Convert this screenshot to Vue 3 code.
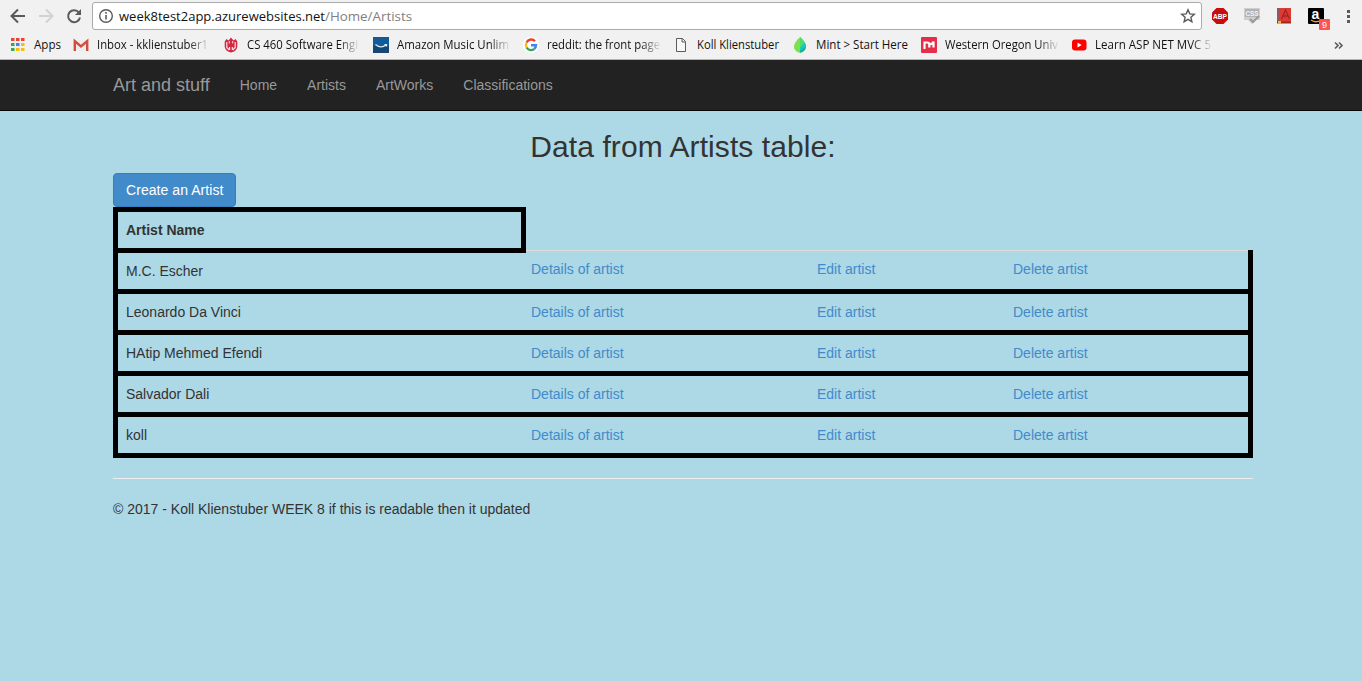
<script setup>
const bookmarks = [
  { icon: 'apps', label: 'Apps', textWidth: 27, size: 'apps' },
  { icon: 'gmail', label: 'Inbox - kklienstuber1', textWidth: 111, size: 'full' },
  { icon: 'crest', label: 'CS 460 Software Engi', textWidth: 111, size: 'full' },
  { icon: 'amazon', label: 'Amazon Music Unlim', textWidth: 112, size: 'full' },
  { icon: 'google', label: 'reddit: the front page', textWidth: 113, size: 'full' },
  { icon: 'page', label: 'Koll Klienstuber', textWidth: 82, size: 'koll' },
  { icon: 'mint', label: 'Mint > Start Here', textWidth: 92, size: 'mint' },
  { icon: 'western', label: 'Western Oregon Univ', textWidth: 113, size: 'full' },
  { icon: 'youtube', label: 'Learn ASP NET MVC 5', textWidth: 116, size: 'full' },
]
const links = ['Home', 'Artists', 'ArtWorks', 'Classifications']
const artists = ['M.C. Escher', 'Leonardo Da Vinci', 'HAtip Mehmed Efendi', 'Salvador Dali', 'koll']
const appColors = ['#ea4335', '#ea4335', '#ea4335', '#34a853', '#4285f4', '#fbbc05', '#34a853', '#fbbc05', '#fbbc05']
</script>

<template>
  <div class="window">
    <header class="browser">
      <div class="toolbar">
        <svg class="nav-icons" width="92" height="32" viewBox="0 0 92 32" fill="none" stroke-width="2">
          <path d="M25 16H12M18 9.5 11.5 16 18 22.5" stroke="#5a5a5a" />
          <path d="M39 16H52M46 9.5 52.5 16 46 22.5" stroke="#d2d2d2" />
          <path d="M79 12.600A6 6 0 1 0 80 17.500" stroke="#5a5a5a" />
          <path d="M81 9v6h-6z" fill="#5a5a5a" />
        </svg>
        <div class="omnibox">
          <svg width="26" height="26" viewBox="0 0 26 26">
            <circle cx="13" cy="13" r="6.3" fill="none" stroke="#5a5a5a" stroke-width="1.4" />
            <path d="M12.2 9h1.6v1.7h-1.6zM12.2 12h1.6v4.6h-1.6z" fill="#5a5a5a" />
          </svg>
          <svg class="url" width="1056" height="26">
            <text x="0" y="18" textLength="206" lengthAdjust="spacingAndGlyphs" fill="#111">week8test2app.azurewebsites.net</text>
            <text x="206" y="18" textLength="87" lengthAdjust="spacingAndGlyphs" fill="#808080">/Home/Artists</text>
          </svg>
          <svg width="26" height="26" viewBox="0 0 26 26">
            <path d="m13 6.800 1.800 4.100 4.500.4-3.400 3 1 4.400-3.900-2.300-3.900 2.300 1-4.400-3.400-3 4.500-.4z" fill="none" stroke="#5a5a5a" stroke-width="1.4" />
          </svg>
        </div>
        <svg class="extensions" width="160" height="32" viewBox="1202 0 160 32">
          <path d="M1216.500 8h7l4.500 4.500v7l-4.500 4.500h-7l-4.500-4.500v-7z" fill="#c70d0d" />
          <text class="abp" x="1213" y="19" textLength="14" lengthAdjust="spacingAndGlyphs">ABP</text>
          <path d="M1244 8h16v12h-4l-4 4-4-4h-4z" fill="#cfcfcf" />
          <path d="M1245 9h14v8h-14z" fill="#b2b2b2" />
          <text class="css" x="1245.500" y="16" textLength="13" lengthAdjust="spacingAndGlyphs">CSS</text>
          <path d="m1250 19 3 3 6-6" fill="none" stroke="#999" stroke-width="2" />
          <path d="M1277 8h14v14h-14z" fill="#d93c35" />
          <path d="M1277 8h3v13h-3z" fill="#8e5960" />
          <path d="M1277 21.500h14v2h-14z" fill="#9e2920" />
          <path d="M1278 21h3v3h-3z" fill="#efb52c" />
          <path d="m1281.500 19 4-9 4 9m-6.500-3h5" stroke="#a7231e" fill="none" stroke-width="1.300" />
          <rect x="1308" y="8" width="16" height="16" rx="1" fill="#000" />
          <text class="amazon-a" x="1311.500" y="18.500">a</text>
          <path d="M1311 20q5 3.500 10 0" stroke="#f49b28" fill="none" stroke-width="1.300" />
          <rect x="1319" y="19" width="11" height="11" rx="1" fill="#ff5252" />
          <text class="badge" x="1322" y="28">9</text>
          <path d="M1347 10h3v3h-3zM1347 15h3v3h-3zM1347 20h3v3h-3z" fill="#5a5a5a" />
        </svg>
      </div>
      <div class="bookmarks">
        <div v-for="b in bookmarks" :key="b.label" class="bookmark" :class="b.size">
          <svg class="icon" width="16" height="16" viewBox="0 0 16 16">
            <g v-if="b.icon === 'apps'">
              <rect v-for="(c, i) in appColors" :key="i" :x="2 + (i % 3) * 5" :y="1 + Math.floor(i / 3) * 5" width="3.500" height="3" :fill="c" />
            </g>
            <g v-else-if="b.icon === 'gmail'">
              <path d="M1 3h14v11H1z" fill="#ececec" />
              <path d="M1.800 14V4L8 9.300 14.200 4v10" fill="none" stroke="#d54b3d" stroke-width="2.400" />
            </g>
            <g v-else-if="b.icon === 'crest'">
              <path d="M3.500 2 1.700 4.500V10q1 4.500 6.300 5.500Q13.300 14.500 14.300 10V4.500L12.500 2l-2 1.500L8 .5 5.500 3.500z" fill="#d32743" />
              <path d="M3.800 5v5.500l2.400 2.500M12.200 5v5.500L9.800 13" fill="none" stroke="#f7dfe1" stroke-width="1.200" />
              <path d="M6.300 4v2.500M9.700 4v2.500" stroke="#f7dfe1" />
              <path d="M6 10h1.200v3H6zM8.800 10H10v3H8.800z" fill="#f7dfe1" />
            </g>
            <g v-else-if="b.icon === 'amazon'">
              <path d="M0 0h16v16H0z" fill="#125b96" />
              <path d="M0 9h16v7H0z" fill="#154775" />
              <path d="M2.500 7.500Q8 12 13 8M11.500 7.500h2v2" fill="none" stroke="#dbefff" stroke-width="1.200" />
            </g>
            <g v-else-if="b.icon === 'google'" fill="none" stroke-width="2.400">
              <circle cx="8" cy="8" r="8" fill="#fff" />
              <path d="M12 4.200A5 5 0 0 0 3.600 5.500" stroke="#ea4335" />
              <path d="M3.600 5.500a5 5 0 0 0 0 5" stroke="#fbbc05" />
              <path d="M3.600 10.500a5 5 0 0 0 7.700 1.400" stroke="#34a853" />
              <path d="M11.300 11.900A5 5 0 0 0 13 8.200H8" stroke="#4285f4" />
            </g>
            <g v-else-if="b.icon === 'page'">
              <path d="M3.500 1.500h6l3 3v10h-9zM9 1.500V5h3.500" fill="#f7f7f7" stroke="#5c5c5c" />
            </g>
            <g v-else-if="b.icon === 'mint'">
              <path d="M8 0C5 3 2 6 2 10q0 4 6 6z" fill="#7be052" />
              <path d="M8 0c3 3 6 6 6 10q0 4-6 6z" fill="#17b779" />
              <path d="M8 0c2 2 4 4 5 6l-5 5z" fill="#4fdc6a" />
              <path d="m8 11 5-5 1 3-6 5z" fill="#15c5da" />
            </g>
            <g v-else-if="b.icon === 'western'">
              <rect width="16" height="16" rx="1" fill="#e62d49" />
              <path d="M3.500 12V5.500h2.500q2.300 0 2.300 2V10.500V7q3.800.3 4.200-2.500V10.500" fill="none" stroke="#fff" stroke-width="2.200" />
            </g>
            <g v-else>
              <rect x="1" y="2.500" width="14.500" height="11" rx="3" fill="#f00" />
              <path d="m6.500 5.500 4.200 2.500-4.200 2.500z" fill="#fff" />
            </g>
          </svg>
          <svg class="label" :class="{ faded: b.size === 'full' }" :width="b.textWidth + 4" height="20">
            <text x="0" y="14" :textLength="b.textWidth" lengthAdjust="spacingAndGlyphs">{{ b.label }}</text>
          </svg>
        </div>
        <svg class="more" width="10" height="10" viewBox="0 0 10 10" fill="none" stroke="#5a5a5a" stroke-width="1.600">
          <path d="m1 2.500 3 3-3 3M5 2.500l3 3-3 3" />
        </svg>
      </div>
    </header>

    <nav class="navbar">
      <a class="brand">Art and stuff</a>
      <a v-for="l in links" :key="l">{{ l }}</a>
    </nav>

    <main class="container">
      <h2>Data from Artists table:</h2>
      <a class="create">Create an Artist</a>
      <div class="heading">Artist Name</div>
      <div class="artists">
        <div v-for="a in artists" :key="a" class="row">
          <span class="name">{{ a }}</span>
          <a>Details of artist</a>
          <a>Edit artist</a>
          <a>Delete artist</a>
        </div>
      </div>
      <footer>© 2017 - Koll Klienstuber WEEK 8 if this is readable then it updated</footer>
    </main>
  </div>
</template>

<style>
body { background: #add8e6; }
</style>

<style scoped>
.window {
  height: 681px;
  overflow: hidden;
  background: #add8e6;
  color: #333;
  font: 14px/20px "Liberation Sans", Arial, sans-serif;
}
.window * { box-sizing: border-box; }
svg { display: block; flex: none; overflow: visible; }
.browser {
  height: 60px;
  background: #f1f1f1;
  border-bottom: 1px solid #b5b5b5;
  font-family: "Open Sans", "Noto Sans", sans-serif;
}
.toolbar { display: flex; height: 32px; }
.omnibox {
  display: flex;
  width: 1110px;
  height: 28px;
  margin-top: 2px;
  border: 1px solid #aaa;
  border-radius: 3px;
  background: #fff;
}
.url { font-size: 13.5px; }
.abp { font: bold 7.5px "Liberation Sans", sans-serif; fill: #fff; }
.css { font: bold 8px "Liberation Sans", sans-serif; fill: #f4f4f4; }
.amazon-a { font: bold 14px "Liberation Sans", sans-serif; fill: #fff; }
.badge { font: 9px "Liberation Sans", sans-serif; fill: #fff; }
.bookmarks {
  display: flex;
  align-items: center;
  height: 26px;
  padding-left: 9px;
}
.bookmark { display: flex; align-items: center; gap: 8px; width: 150px; flex: none; }
.apps { width: 64px; gap: 9px; }
.koll { width: 119px; }
.mint { width: 129px; }
.label { font-size: 12px; fill: #111; }
.faded {
  -webkit-mask-image: linear-gradient(to right, #000 80%, transparent 98%);
  mask-image: linear-gradient(to right, #000 80%, transparent 98%);
}
.more { margin-left: 113px; }
.navbar {
  display: flex;
  gap: 30px;
  align-items: center;
  height: 51px;
  padding-left: 113px;
  background: #222;
  border-bottom: 1px solid #080808;
  color: #999;
}
.brand { font-size: 18px; }
.container {
  width: 1140px;
  margin-left: 113px;
}
h2 {
  margin: 0;
  padding-top: 19px;
  height: 62px;
  font-size: 30px;
  line-height: 33px;
  font-weight: 400;
  letter-spacing: 0.08px;
  text-align: center;
}
.create {
  display: block;
  width: 123px;
  height: 34px;
  padding: 6px 12px;
  border: 1px solid #357ebd;
  border-radius: 4px;
  background: #428bca;
  color: #fff;
  letter-spacing: 0.06px;
  white-space: nowrap;
}
.heading {
  position: relative;
  z-index: 1;
  width: 413px;
  height: 46px;
  padding: 8px;
  border: 5px solid #000;
  font-weight: 700;
}
.artists {
  margin-top: -3px;
  border: solid #000;
  border-width: 0 5px;
}
.row {
  display: grid;
  grid-template-columns: 405px 286px 196px 1fr;
  padding: 8px;
  height: 41px;
  border-bottom: 5px solid #000;
}
.row a { color: #428bca; }
.row:first-child { height: 44px; border-top: 1px solid #ddd; }
.row:first-child .name { padding-top: 2px; }
footer {
  margin-top: 20px;
  padding-top: 20px;
  border-top: 1px solid #eee;
}
</style>
